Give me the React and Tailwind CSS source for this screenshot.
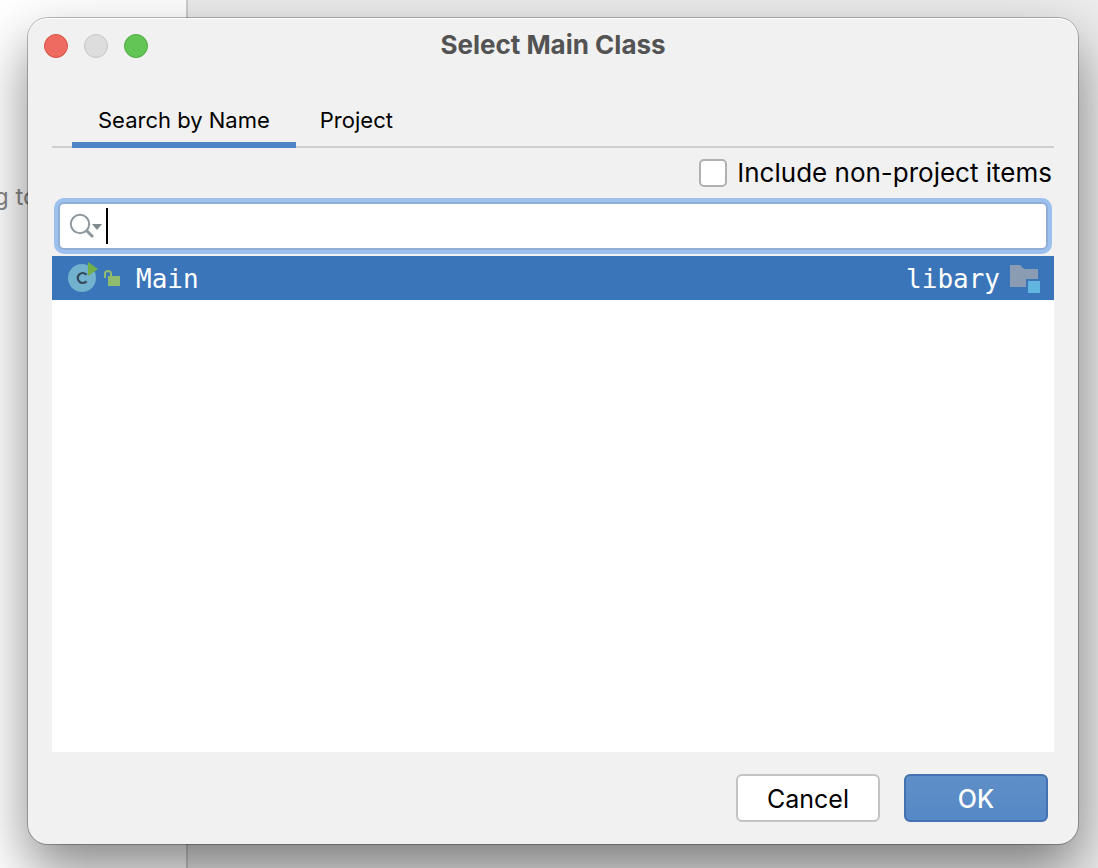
import { useState } from "react";

function SearchIcon() {
  return (
    <svg width="34" height="30" viewBox="0 0 34 30" fill="none" aria-hidden="true">
      <circle cx="12" cy="13" r="9.2" stroke="#8f989e" strokeWidth="2" />
      <path d="M18.500 19.500L25 26" stroke="#8f989e" strokeWidth="3" />
      <path d="M24 13h10l-5 6z" fill="#7f8b91" />
    </svg>
  );
}

function ClassIcon() {
  return (
    <svg width="30" height="34" viewBox="0 0 30 34" fill="none" aria-hidden="true">
      <circle cx="14" cy="17" r="14" fill="#72b2cf" />
      <path d="M20 1v14l10-7z" fill="#72b047" />
      <path d="M18.600 13.800A5 5 0 1 0 18.600 20.200" stroke="#34495a" strokeWidth="2.200" />
    </svg>
  );
}

function UnlockIcon() {
  return (
    <svg width="16" height="16" viewBox="0 0 16 16" fill="none" aria-hidden="true">
      <path d="M1 8V4a3 3 0 0 1 6 0v3" stroke="#8fbb6e" strokeWidth="2" />
      <path d="M4 6h12v10H4z" fill="#8fbb6e" />
    </svg>
  );
}

function ModuleIcon() {
  return (
    <svg width="30" height="28" viewBox="0 0 30 28" aria-hidden="true">
      <path d="M0 0h10l4 4h14v10H16v8H0z" fill="#8a9cb1" />
      <path d="M18 16h12v12H18z" fill="#62b5de" />
    </svg>
  );
}

export default function App() {
  const [query, setQuery] = useState("");
  return (
    <div
      className="relative flex min-h-screen flex-col overflow-hidden bg-[#ececec] pt-[18px] pr-5 pb-6 pl-7 text-black"
      style={{ fontFamily: 'Inter, "Liberation Sans", sans-serif' }}
    >
      <div className="absolute inset-y-0 left-0 w-[188px] border-r-2 border-[#cdcdcd] bg-white pt-[182px] text-[24px] leading-[30px] text-[#888888]">
        <span className="-ml-1.5 whitespace-nowrap">g to</span>
      </div>

      <main className="relative flex flex-1 flex-col rounded-[20px] bg-[#f1f1f1] px-6 shadow-[0_0_0_1px_rgba(0,0,0,0.26),0_26px_56px_rgba(0,0,0,0.48),inset_0_1px_0_#ffffff]">
        <header className="-mx-6 grid h-[54px] grid-cols-[1fr_auto_1fr] items-center px-4">
          <div className="flex gap-4 pt-0.5">
            <button aria-label="Close" className="size-6 rounded-full border border-[#da5047] bg-[#ed6b60]" />
            <button aria-label="Minimize" disabled className="size-6 rounded-full border border-[#c4c4c4] bg-[#dddddd]" />
            <button aria-label="Zoom" className="size-6 rounded-full border border-[#50ab42] bg-[#62c555]" />
          </div>
          <h1 className="text-[26px] leading-8 font-bold text-[#535353]">Select Main Class</h1>
        </header>

        <div role="tablist" className="mt-[26px] flex h-[50px] border-b-2 border-[#cfcfcf] px-5 text-[22px] leading-7">
          <button role="tab" aria-selected="true" className="-mb-0.5 border-b-6 border-[#4e83c5] px-[26px]">
            Search by Name
          </button>
          <button role="tab" aria-selected="false" className="-mb-0.5 border-b-6 border-transparent px-6">
            Project
          </button>
        </div>

        <label className="flex h-[50px] items-center justify-end gap-2.5 pr-0.5 text-[26px] leading-8">
          <input type="checkbox" className="size-7 appearance-none rounded-[5px] border-2 border-[#b0b0b0] bg-white checked:bg-[#4e83c5]" />
          Include non-project items
        </label>

        <label className="mx-0.5 flex rounded-[10px] bg-[#9cc1ee] p-1">
          <span className="flex h-12 flex-1 items-center rounded-md border-2 border-[#8eaed7] bg-white pl-2">
            <SearchIcon />
            <span className="ml-1 h-9 w-0.5 bg-black" />
            <input
              type="text"
              aria-label="Search by name"
              value={query}
              onChange={(e) => setQuery(e.target.value)}
              className="h-9 min-w-0 flex-1 bg-transparent text-[26px] caret-transparent outline-none"
            />
          </span>
        </label>

        <ul
          className="mt-0.5 flex-1 bg-white text-[26px] leading-8 text-white"
          style={{ fontFamily: '"DejaVu Sans Mono", monospace' }}
        >
          <li className="flex h-11 items-center bg-[#3b75b9] pr-3.5 pl-4">
            <ClassIcon />
            <span className="ml-1.5">
              <UnlockIcon />
            </span>
            <span className="ml-4 flex-1 pt-0.5">Main</span>
            <span className="mr-2.5 pt-0.5">libary</span>
            <span className="pt-0.5">
              <ModuleIcon />
            </span>
          </li>
        </ul>

        <footer className="flex justify-end gap-6 py-[22px] pr-1.5 text-[25px] leading-8">
          <button className="h-12 w-36 rounded-md border-2 border-[#c3c3c3] bg-white pt-0.5">Cancel</button>
          <button className="h-12 w-36 rounded-md border-2 border-[#4471b2] bg-linear-to-b from-[#5f8fc7] to-[#5588c6] pt-0.5 font-medium text-white">
            OK
          </button>
        </footer>
      </main>
    </div>
  );
}
